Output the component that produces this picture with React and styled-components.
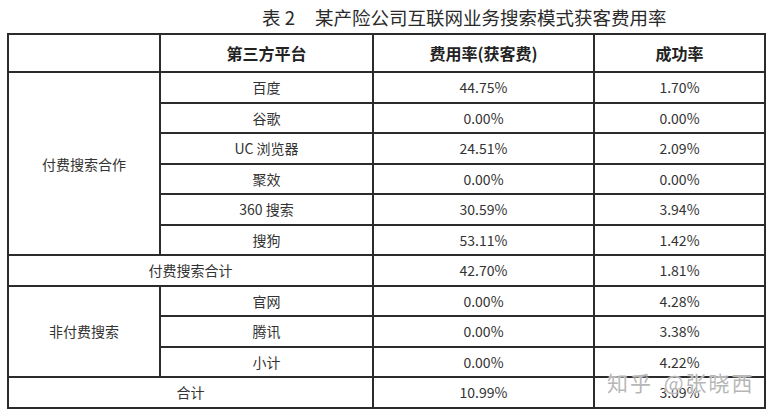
import React from "react";
import styled, { createGlobalStyle } from "styled-components";

const GlobalStyle = createGlobalStyle`
  html, body {
    margin: 0;
    padding: 0;
    background: #fff;
  }
  body {
    font-family: "Noto Sans CJK SC", "Noto Sans", sans-serif;
    color: #333;
  }
`;

const Page = styled.div`
  position: relative;
  width: 771px;
  height: 413px;
  overflow: hidden;
  background: #fff;
`;

const Caption = styled.div`
  height: 33px;
  display: flex;
  align-items: center;
  padding-left: 262px;
  box-sizing: border-box;
  font-size: 18.5px;
  color: #2a2a2a;
  .num {
    margin-right: 20px;
  }
`;

const Table = styled.table`
  margin-left: 7px;
  width: 757px;
  table-layout: fixed;
  border-collapse: collapse;
  border: 2px solid #2b2b2b;
  td,
  th {
    border: 2px solid #2b2b2b;
    text-align: center;
    padding: 0;
  }
`;

const HeadRow = styled.tr`
  height: 38px;
  th {
    font-size: 16px;
    font-weight: 700;
    color: #222;
  }
`;

const Row = styled.tr`
  height: 30.5px;
  td {
    font-size: 14px;
    color: #333;
  }
`;

const Watermark = styled.div`
  position: absolute;
  left: 607px;
  top: 367px;
  font-size: 21px;
  letter-spacing: 2px;
  word-spacing: 4px;
  color: rgba(150, 150, 150, 0.7);
  text-shadow: 0 0 1px #fff, 0 0 2px #fff;
  pointer-events: none;
`;

const paid = [
  ["百度", "44.75%", "1.70%"],
  ["谷歌", "0.00%", "0.00%"],
  ["UC 浏览器", "24.51%", "2.09%"],
  ["聚效", "0.00%", "0.00%"],
  ["360 搜索", "30.59%", "3.94%"],
  ["搜狗", "53.11%", "1.42%"],
];

const free = [
  ["官网", "0.00%", "4.28%"],
  ["腾讯", "0.00%", "3.38%"],
  ["小计", "0.00%", "4.22%"],
];

export default function App() {
  return (
    <Page>
      <GlobalStyle />
      <Caption>
        <span className="num">表 2</span>
        <span>某产险公司互联网业务搜索模式获客费用率</span>
      </Caption>
      <Table>
        <colgroup>
          <col style={{ width: 152 }} />
          <col style={{ width: 213 }} />
          <col style={{ width: 221 }} />
          <col style={{ width: 171 }} />
        </colgroup>
        <thead>
          <HeadRow>
            <th></th>
            <th>第三方平台</th>
            <th>费用率(获客费)</th>
            <th>成功率</th>
          </HeadRow>
        </thead>
        <tbody>
          {paid.map((r, i) => (
            <Row key={r[0]}>
              {i === 0 && <td rowSpan={paid.length}>付费搜索合作</td>}
              <td>{r[0]}</td>
              <td>{r[1]}</td>
              <td>{r[2]}</td>
            </Row>
          ))}
          <Row>
            <td colSpan={2}>付费搜索合计</td>
            <td>42.70%</td>
            <td>1.81%</td>
          </Row>
          {free.map((r, i) => (
            <Row key={r[0]}>
              {i === 0 && <td rowSpan={free.length}>非付费搜索</td>}
              <td>{r[0]}</td>
              <td>{r[1]}</td>
              <td>{r[2]}</td>
            </Row>
          ))}
          <Row>
            <td colSpan={2}>合计</td>
            <td>10.99%</td>
            <td>3.09%</td>
          </Row>
        </tbody>
      </Table>
      <Watermark>知乎 @张晓西</Watermark>
    </Page>
  );
}
